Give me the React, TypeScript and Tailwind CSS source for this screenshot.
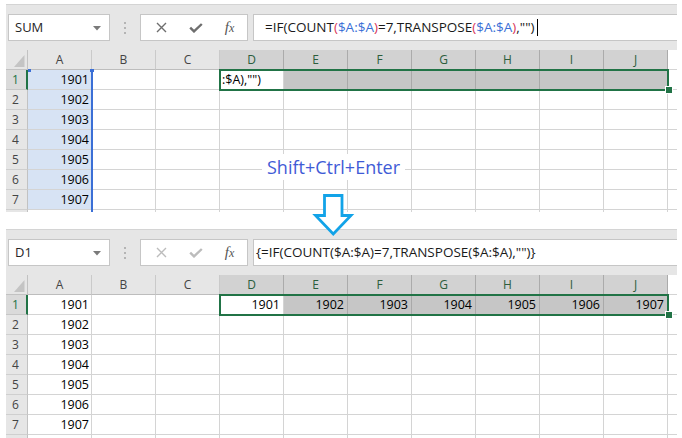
import React from 'react';

const COLS = ['A', 'B', 'C', 'D', 'E', 'F', 'G', 'H', 'I', 'J'];
const YEARS = ['1901', '1902', '1903', '1904', '1905', '1906', '1907'];

function Band({ name, top }: { name: string; top: boolean }) {
  return (
    <div className="h-[46px] bg-[#e6e6e6] border-t border-[#d4d4d4] flex items-start pt-[9px] pl-[2px]">
      <div className="w-[102px] h-[27px] bg-white border border-[#c6c6c6] flex items-center pl-[6px] pr-[8px] pt-[1px] text-[13px] text-[#262626]">
        <span>{name}</span>
        <svg className="ml-auto" width="8" height="5" viewBox="0 0 8 5">
          <path d="M0 0H8L4 4.5Z" fill="#7a7a7a" />
        </svg>
      </div>
      <div className="w-[30px] h-[27px] flex flex-col items-center justify-center gap-[3px]">
        <div className="w-[2px] h-[2px] bg-[#b4b4b4]" />
        <div className="w-[2px] h-[2px] bg-[#b4b4b4]" />
        <div className="w-[2px] h-[2px] bg-[#b4b4b4]" />
      </div>
      <div className="w-[108px] h-[27px] bg-white border border-[#c6c6c6] flex items-center">
        <div className="w-[39px] flex justify-center pl-[2px]">
          <svg width="11" height="11" viewBox="0 0 11 11">
            <path d="M1 1L10 10M10 1L1 10" stroke={top ? '#6e6e6e' : '#bcbcbc'} strokeWidth="1.4" fill="none" />
          </svg>
        </div>
        <div className="w-[32px] flex justify-center">
          <svg width="14" height="10" viewBox="0 0 14 10">
            <path d="M1.2 4.6L5 8.4L12.8 1" stroke={top ? '#6e6e6e' : '#bcbcbc'} strokeWidth="2.4" fill="none" />
          </svg>
        </div>
        <div className="w-[35px] flex justify-center">
          <span className="font-['Liberation_Serif',serif] italic text-[15px] leading-none text-[#555555]">
            f<span className="text-[12px]">x</span>
          </span>
        </div>
      </div>
      <div
        className={
          top
            ? 'ml-[5px] flex-1 h-[27px] bg-white border-y border-l border-[#c6c6c6] flex items-center pl-[11px] text-[13.5px] text-[#1a1a1a] whitespace-nowrap'
            : 'ml-[5px] flex-1 h-[27px] bg-white border-y border-l border-[#c6c6c6] flex items-center pl-[2px] text-[13.5px] text-[#1a1a1a] whitespace-nowrap'
        }
      >
        {top ? (
          <>
            <span>=IF(COUNT</span>
            <span className="text-[#d9365a]">(</span>
            <span className="text-[#3b6fd6]">$A:$A</span>
            <span className="text-[#d9365a]">)</span>
            <span>=7,TRANSPOSE</span>
            <span className="text-[#d9365a]">(</span>
            <span className="text-[#3b6fd6]">$A:$A</span>
            <span className="text-[#d9365a]">)</span>
            <span>,""</span>
            <span>)</span>
            <span className="ml-[2px] w-[1px] h-[17px] bg-black" />
          </>
        ) : (
          <span>{'{=IF(COUNT($A:$A)=7,TRANSPOSE($A:$A),"")}'}</span>
        )}
      </div>
    </div>
  );
}

function HeaderRow() {
  return (
    <div className="flex h-[20px]">
      <div className="w-[22px] h-full bg-[#e6e6e6] border-r border-b border-[#c2c2c2]">
        <svg width="21" height="19" viewBox="0 0 21 19">
          <polygon points="18.5,5 18.5,17 8,17" fill="#c4c4c4" />
        </svg>
      </div>
      {COLS.map((c, i) =>
        i >= 3 ? (
          <div
            key={c}
            className="w-[64px] h-full bg-[#d2d2d2] border-r border-b border-r-[#ababab] border-b-[#b4b4b4] flex items-center justify-center text-[12px] text-[#2c5d3c]"
          >
            {c}
          </div>
        ) : (
          <div
            key={c}
            className="w-[64px] h-full bg-[#e6e6e6] border-r border-b border-r-[#cacaca] border-b-[#bdbdbd] flex items-center justify-center text-[12px] text-[#444444]"
          >
            {c}
          </div>
        )
      )}
      <div className="w-[9px] h-full bg-white border-b border-[#d4d4d4]" />
    </div>
  );
}

function DataRow({ r, top }: { r: number; top: boolean }) {
  const first = r === 1;
  return (
    <div className="flex h-[20px]">
      {first ? (
        <div className="w-[22px] h-full bg-[#dadada] border-b border-b-[#c6c6c6] border-r-2 border-r-[#217346] flex items-center pl-[6px] pt-[1px] text-[12px] text-[#217346]">
          {r}
        </div>
      ) : (
        <div className="w-[22px] h-full bg-[#e6e6e6] border-b border-b-[#cfcfcf] border-r border-r-[#c2c2c2] flex items-center pl-[6px] pt-[1px] text-[12px] text-[#444444]">
          {r}
        </div>
      )}
      {COLS.map((c, i) => {
        if (i === 0) {
          return (
            <div
              key={c}
              className={
                top
                  ? 'w-[64px] h-full bg-[#d7e3f4] border-r border-b border-[#d4d4d4] flex items-center justify-end pr-[2px] pt-[2px] text-[12.5px] text-black'
                  : 'w-[64px] h-full bg-white border-r border-b border-[#d4d4d4] flex items-center justify-end pr-[2px] pt-[2px] text-[12.5px] text-black'
              }
            >
              {YEARS[r - 1]}
            </div>
          );
        }
        if (first && i === 3) {
          return (
            <div
              key={c}
              className={
                top
                  ? 'w-[64px] h-full bg-white border-r border-b border-[#d4d4d4] flex items-center justify-start pl-[2px] pt-[2px] text-[12.5px] text-black whitespace-nowrap'
                  : 'w-[64px] h-full bg-white border-r border-b border-[#d4d4d4] flex items-center justify-end pr-[3px] pt-[2px] text-[12.5px] text-black'
              }
            >
              {top ? ':$A),"")' : '1901'}
            </div>
          );
        }
        if (first && i > 3) {
          return (
            <div
              key={c}
              className="w-[64px] h-full bg-[#c6c6c6] border-r border-b border-[#a9a9a9] flex items-center justify-end pr-[3px] pt-[2px] text-[12.5px] text-black"
            >
              {top ? '' : YEARS[i - 3]}
            </div>
          );
        }
        return <div key={c} className="w-[64px] h-full bg-white border-r border-b border-[#d4d4d4]" />;
      })}
      <div className="w-[9px] h-full bg-white border-b border-[#d4d4d4]" />
    </div>
  );
}

function TailRow({ h3 }: { h3: boolean }) {
  return (
    <div className={h3 ? 'flex h-[3px]' : 'flex h-[2px]'}>
      <div className="w-[22px] h-full bg-[#e6e6e6] border-r border-[#c2c2c2]" />
      {COLS.map((c) => (
        <div key={c} className="w-[64px] h-full bg-white border-r border-[#d4d4d4]" />
      ))}
      <div className="w-[9px] h-full bg-white" />
    </div>
  );
}

function Grid({ top }: { top: boolean }) {
  return (
    <div className="relative">
      <HeaderRow />
      {[1, 2, 3, 4, 5, 6, 7].map((r) => (
        <DataRow key={r} r={r} top={top} />
      ))}
      <TailRow h3={!top} />
      {top && (
        <>
          <div className="absolute left-[85px] top-[20px] w-[2px] h-[142px] bg-[#3b6fd6]" />
          <div className="absolute left-[22px] top-[19px] w-[3px] h-[3px] bg-[#3b6fd6]" />
          <div className="absolute left-[84px] top-[19px] w-[4px] h-[3px] bg-[#3b6fd6]" />
        </>
      )}
      <div className="absolute left-[213px] top-[19px] w-[450px] h-[22px] border-2 border-[#217346]" />
      <div className="absolute left-[659px] top-[36px] w-[8px] h-[8px] bg-[#217346] border border-white" />
    </div>
  );
}

export default function App() {
  return (
    <div className="relative w-[682px] h-[438px] overflow-hidden bg-white font-['Open_Sans',sans-serif]">
      <div className="pt-[4px] pl-[6px] w-[677px]">
        <Band name="SUM" top={true} />
        <Grid top={true} />
        <div className="h-[17px]" />
        <Band name="D1" top={false} />
        <Grid top={false} />
      </div>
      <div className="absolute left-[262px] top-[154px] bg-white px-[5px] py-[4px] text-[18px] leading-none text-[#3f5bd6] whitespace-nowrap">
        Shift+Ctrl+Enter
      </div>
      <svg className="absolute left-[310px] top-[190px]" width="46" height="50" viewBox="0 0 46 50">
        <polygon
          points="14.5,5.5 32,5.5 32,25.5 41,25.5 23.25,44 5.5,25.5 14.5,25.5"
          fill="white"
          stroke="#12a3e8"
          strokeWidth="2.8"
        />
      </svg>
    </div>
  );
}
